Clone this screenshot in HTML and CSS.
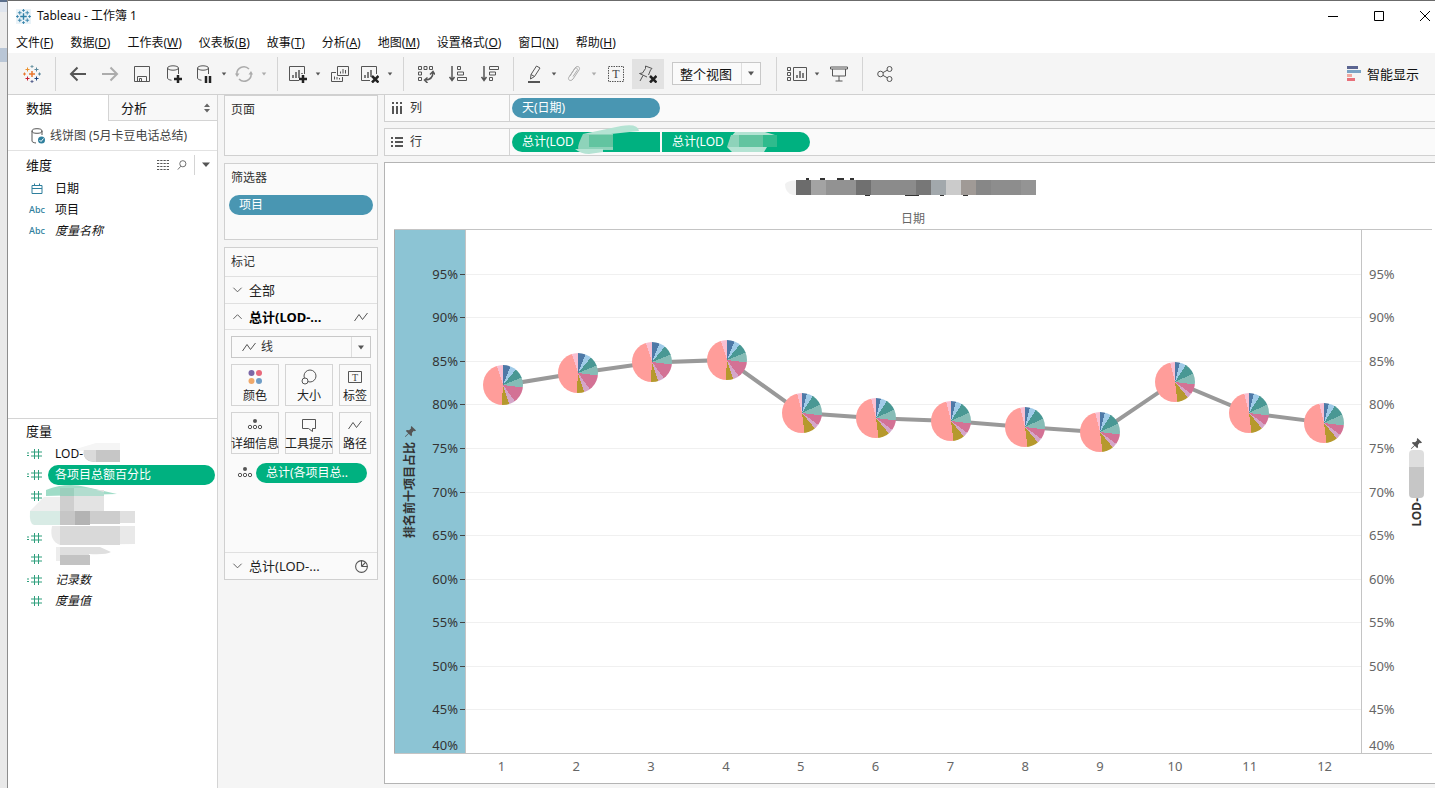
FILE: index.html
```html
<!DOCTYPE html>
<html lang="zh-CN">
<head>
<meta charset="utf-8">
<title>Tableau - 工作簿 1</title>
<link rel="stylesheet" href="styles.css">
</head>
<body>
<svg class="sprite" aria-hidden="true">
  <symbol id="i-line" viewBox="0 0 16 12"><path d="M1.500 10 L6 3.500 L9.500 8.500 L14.500 2"/></symbol>
  <symbol id="i-caret" viewBox="0 0 8 5"><path class="solid" d="M1 .5h6L4 4.500z"/></symbol>
  <symbol id="i-num" viewBox="0 0 16 12"><path d="M8.500 1v10M12.500 1v10M5 4h11M5 8h11"/></symbol>
  <symbol id="i-calc" viewBox="0 0 16 12"><path d="M8.500 1v10M12.500 1v10M5 4h11M5 8h11M1 5h2M1 7.500h2"/></symbol>
  <symbol id="i-detail" viewBox="0 0 16 14"><circle class="solid" cx="8" cy="3" r="2"/><circle cx="3" cy="9" r="1.700"/><circle cx="8" cy="9" r="1.700"/><circle cx="13" cy="9" r="1.700"/></symbol>
  <symbol id="i-down" viewBox="0 0 12 8"><path d="M1.500 1.500L6 6l4.500-4.500"/></symbol>
  <symbol id="i-up" viewBox="0 0 12 8"><path d="M1.500 6L6 1.500 10.500 6"/></symbol>
  <symbol id="i-pin" viewBox="0 0 14 14"><path class="solid" d="M8 1l5 5-1.500.7-1-.4-2 2.200.2 2.500-1 1-2.600-2.600L1.500 13 1 12.500 4.600 9 2 6.400l1-1 2.500.2 2.200-2L7.300 2.500z"/></symbol>
</svg>

<div class="desktop-edge"></div>
<div class="app">
  <header class="titlebar">
    <svg class="app-icon" viewBox="0 0 16 16"><rect width="16" height="16" fill="#eaf3f8"/><path d="M8 4.500v7M4.500 8h7" stroke="#2f7fa5" stroke-width="1.500"/><path d="M8 0v3M6.500 1.500h3M8 13v3M6.500 14.500h3M0 8h3M1.500 6.500v3M13 8h3M14.500 6.500v3M4 2v4M2 4h4M12 2v4M10 4h4M4 10v4M2 12h4M12 10v4M10 12h4" stroke="#3b86ad"/></svg>
    <span class="window-title">Tableau - 工作簿 1</span>
    <div class="window-buttons">
      <button aria-label="最小化"><svg viewBox="0 0 12 12"><path d="M1 6.500h10"/></svg></button>
      <button aria-label="最大化"><svg viewBox="0 0 12 12"><path d="M1.500 1.500h9v9h-9z"/></svg></button>
      <button aria-label="关闭"><svg viewBox="0 0 12 12"><path d="M1 1l10 10M11 1L1 11"/></svg></button>
    </div>
  </header>

  <nav class="menubar">
    <button>文件(<u>F</u>)</button><button>数据(<u>D</u>)</button><button>工作表(<u>W</u>)</button><button>仪表板(<u>B</u>)</button><button>故事(<u>T</u>)</button><button>分析(<u>A</u>)</button><button>地图(<u>M</u>)</button><button>设置格式(<u>O</u>)</button><button>窗口(<u>N</u>)</button><button>帮助(<u>H</u>)</button>
  </nav>

  <div class="toolbar">
    <button class="tool" aria-label="开始页面"><svg viewBox="0 0 18 18"><path d="M9 6v6M6 9h6" stroke="#e8762d" stroke-width="1.500"/><path d="M9 0v3M7.500 1.500h3" stroke="#7199a6"/><path d="M9 15v3M7.500 16.500h3" stroke="#5b6591"/><path d="M0 9h3M1.500 7.500v3" stroke="#e8762d"/><path d="M15 9h3M16.500 7.500v3" stroke="#5b879b"/><path d="M4.500 2.500v4M2.500 4.500h4" stroke="#eb912c"/><path d="M13.500 2.500v4M11.500 4.500h4" stroke="#59879b"/><path d="M4.500 11.500v4M2.500 13.500h4" stroke="#c72035"/><path d="M13.500 11.500v4M11.500 13.500h4" stroke="#1f457e"/></svg></button>
    <span class="sep"></span>
    <button class="tool" aria-label="撤消"><svg viewBox="0 0 18 18"><path class="heavy" d="M17 9H2M8.500 2.500L2 9l6.500 6.500"/></svg></button>
    <button class="tool faint" aria-label="重做"><svg viewBox="0 0 18 18"><path class="heavy" d="M1 9h15M9.500 2.500L16 9l-6.500 6.500"/></svg></button>
    <button class="tool" aria-label="保存"><svg viewBox="0 0 18 18"><path d="M1.500 1.500h15v15h-15zM4.500 16.500v-5h9v5M6.500 16.500v-3h2v3"/></svg></button>
    <button class="tool" aria-label="新建数据源"><svg viewBox="0 0 18 18"><ellipse cx="8" cy="3" rx="5.500" ry="2.200"/><path d="M2.500 3v10c0 1 1.500 2 4 2.200M13.500 3v6"/><path class="bold" d="M13 10v8M9 14h8"/></svg></button>
    <button class="tool narrow" aria-label="暂停自动更新"><svg viewBox="0 0 18 18"><ellipse cx="8" cy="3" rx="5.500" ry="2.200"/><path d="M2.500 3v10c0 1 1.500 2 4 2.200M13.500 3v6"/><path class="bold" d="M11 11v7M15 11v7"/></svg></button>
    <button class="drop" aria-label="更新选项"><svg><use href="#i-caret"/></svg></button>
    <button class="tool narrow faint" aria-label="刷新"><svg viewBox="0 0 18 18"><path class="mid" d="M2 10a7 7 0 0 1 12-6M16 8a7 7 0 0 1-12 6"/><path class="solid" d="M0 8.500h4.500L2 12zM13.500 9.500h4.500L16 6z"/></svg></button>
    <button class="drop faint" aria-label="刷新选项"><svg><use href="#i-caret"/></svg></button>
    <span class="sep"></span>
    <button class="tool narrow" aria-label="新建工作表"><svg viewBox="0 0 18 18"><path d="M10 15.500H.5v-14h15V9"/><path class="mid" d="M4 13v-3M7 13V7M10 13V5M13 9V8"/><path class="bold" d="M14 10v8M10 14h8"/></svg></button>
    <button class="drop" aria-label="新建选项"><svg><use href="#i-caret"/></svg></button>
    <button class="tool" aria-label="复制工作表"><svg viewBox="0 0 18 18"><path d="M6.500 1.500h11v9h-11zM5 7.500H.5v9h11V12"/><path d="M9.500 8.500V6.500M12 8.500V4M14.500 8.500V5M3.500 14.500v-3M6 14.500V12M8.500 14.500V13"/></svg></button>
    <button class="tool narrow" aria-label="清除工作表"><svg viewBox="0 0 18 18"><path d="M9 15.500H.5v-14h15V9"/><path class="mid" d="M4 13v-3M7 13V7M10 12V5"/><path class="bold" d="M11 11l6.500 6.500M17.500 11L11 17.500"/></svg></button>
    <button class="drop" aria-label="清除选项"><svg><use href="#i-caret"/></svg></button>
    <span class="sep"></span>
    <button class="tool" aria-label="交换行和列"><svg viewBox="0 0 18 18"><path d="M1.500 1.500h3v3h-3zM7 1.500h3v3H7zM12.500 1.500h3v3h-3zM1.500 7h3v3h-3zM1.500 12.500h3v3h-3z"/><path class="mid" d="M16 7c0 5-3 8-8 8M13 9.500L16 6.500l2 3M10.500 12.500L7.500 15l3 3"/></svg></button>
    <button class="tool" aria-label="升序排序"><svg viewBox="0 0 18 18"><path class="mid" d="M3 1v14M.5 12L3 15.500 5.500 12"/><path d="M8.500 1.500h3v3h-3zM8.500 7h6v3h-6zM8.500 12.500h9v3h-9z"/></svg></button>
    <button class="tool" aria-label="降序排序"><svg viewBox="0 0 18 18"><path class="mid" d="M3 1v14M.5 12L3 15.500 5.500 12"/><path d="M8.500 1.500h9v3h-9zM8.500 7h6v3h-6zM8.500 12.500h3v3h-3z"/></svg></button>
    <span class="sep"></span>
    <button class="tool narrow" aria-label="突出显示"><svg viewBox="0 0 18 18"><path d="M6 9.500L11.500 1l3.500 2-5.500 8.500-4 2.500zM6 9.500l3.500 2"/><path class="heavy" d="M3 17h12"/></svg></button>
    <button class="drop" aria-label="突出显示选项"><svg><use href="#i-caret"/></svg></button>
    <button class="tool narrow faint" aria-label="分组"><svg viewBox="0 0 18 18"><path d="M5 11l5-8c2-3 6-1 4 2l-6 9c-2 3-6 1-4-2l5.500-8c1.500-2 4-.5 2.500 1.500l-4 6"/></svg></button>
    <button class="drop faint" aria-label="分组选项"><svg><use href="#i-caret"/></svg></button>
    <button class="tool" aria-label="显示标记标签"><svg viewBox="0 0 18 18"><path stroke-dasharray="1.500 1" d="M1.500 1.500h15v15h-15z"/><text x="9" y="13" text-anchor="middle">T</text></svg></button>
    <button class="tool active" aria-label="修复轴"><svg viewBox="0 0 18 18"><path d="M6.500 1l6.500 2.500-1.500 1.500-2 5M6.500 1v2.500L3.500 8 .5 8.500 8 12M4 10.500L1 16"/><path class="bold" d="M11 11l6.500 6.500M17.500 11L11 17.500"/></svg></button>
    <div class="select-box fit"><select aria-label="适合"><option>整个视图</option></select><span class="arrow"><svg><use href="#i-caret"/></svg></span></div>
    <span class="sep"></span>
    <button class="tool narrow wide-icon" aria-label="显示卡"><svg viewBox="0 0 20 18"><path d="M.5 2.500h3v3h-3zM.5 7.500h3v3h-3zM.5 12.500h3v3h-3zM6.500 2.500h13v13h-13z"/><path class="mid" d="M10 13v-3M13 13V6M16 13V8"/></svg></button>
    <button class="drop" aria-label="显示卡选项"><svg><use href="#i-caret"/></svg></button>
    <button class="tool" aria-label="演示模式"><svg viewBox="0 0 18 18"><path d="M.5 2h17v2H.5zM2.500 4v7h13V4M9 11v5M5.500 16h7"/></svg></button>
    <span class="sep"></span>
    <button class="tool" aria-label="共享"><svg viewBox="0 0 18 18"><circle cx="4.500" cy="9" r="2.800"/><circle cx="13.500" cy="4" r="2.500"/><circle cx="13.500" cy="14" r="2.500"/><path d="M7 7.600l4.300-2.400M7 10.400l4.300 2.400"/></svg></button>
    <button class="show-me"><svg viewBox="0 0 14 16"><path fill="#5b6591" d="M0 0h11v3H0z"/><path fill="#7ba3c4" d="M0 4h14v3H0z"/><path fill="#f0a9a0" d="M0 8h5v3H0z"/><path fill="#e8707a" d="M0 12h8v3H0z"/></svg>智能显示</button>
  </div>

  <div class="workspace">
    <aside class="data-pane">
      <div class="tabs">
        <button class="tab selected">数据</button>
        <button class="tab">分析<svg viewBox="0 0 6 10"><path d="M0 4l3-3.500L6 4zM0 6l3 3.500L6 6z"/></svg></button>
      </div>
      <div class="source">
        <svg viewBox="0 0 14 16"><ellipse cx="6" cy="3" rx="5" ry="2.300"/><path d="M1 3v10c0 1 1.500 1.700 4 2M11 3v4"/><circle cx="10.500" cy="12" r="3.500" fill="#2f7f9d" stroke="none"/><path stroke="#fff" d="M8.500 12l1.500 1.500 2.500-3"/></svg>
        <span>线饼图 (5月卡豆电话总结)</span>
      </div>
      <section class="dimensions">
        <div class="section-head"><h2>维度</h2>
          <button aria-label="查看数据"><svg viewBox="0 0 12 10"><path stroke-dasharray="2.250 1" d="M0 .5h12M0 3.500h12M0 6.500h12M0 9.500h12"/></svg></button>
          <button aria-label="查找字段"><svg viewBox="0 0 12 12"><circle cx="7" cy="4.500" r="3.700"/><path d="M4.500 7.500L1 11.500"/></svg></button>
          <span class="bar"></span>
          <button aria-label="菜单"><svg viewBox="0 0 8 5"><path class="solid" d="M0 .5h8L4 5z"/></svg></button>
        </div>
        <ul class="fields blue">
          <li><span class="type"><svg viewBox="0 0 12 12"><path d="M1 2.500h10v8H1zM1 5.500h10M3.500.5v2M8.500.5v2"/></svg></span><span class="name">日期</span></li>
          <li><span class="type">Abc</span><span class="name">项目</span></li>
          <li><span class="type">Abc</span><span class="name generated">度量名称</span></li>
        </ul>
      </section>
      <section class="measures">
        <div class="section-head"><h2>度量</h2></div>
        <ul class="fields green">
          <li><span class="type"><svg><use href="#i-calc"/></svg></span><span class="name">LOD-</span></li>
          <li><span class="type"><svg><use href="#i-calc"/></svg></span><span class="name chosen">各项目总额百分比</span></li>
          <li><span class="type"><svg><use href="#i-num"/></svg></span></li>
          <li></li>
          <li><span class="type"><svg><use href="#i-calc"/></svg></span></li>
          <li><span class="type"><svg><use href="#i-num"/></svg></span></li>
          <li><span class="type"><svg><use href="#i-calc"/></svg></span><span class="name generated">记录数</span></li>
          <li><span class="type"><svg><use href="#i-num"/></svg></span><span class="name generated">度量值</span></li>
        </ul>
        <svg class="redaction list-redaction" viewBox="0 0 125 130"><path fill="#f5f5f5" d="M52 6l20-6h24v8H56z"/><path fill="#c6c6c6" d="M60 7h36v12H70q-12-1-10-12z"/><path fill="#dadada" d="M60 7h12v12q-14-1-12-12z"/>
          <path fill="#9fdcc7" d="M22 47q20-8 40-3l31 7-71 2z"/><path fill="#e3e3e3" d="M36 47h44v22H36z"/><path fill="#9bcfbd" d="M36 45h14v8H36z"/><path fill="#b2ddcf" d="M50 45h15l15 4v4H50z"/><path fill="#cfcfcf" d="M36 53h14v15H36z"/><path fill="#efefef" d="M20 54h16v14H6z"/><path fill="#d8ebe5" d="M6 68h30v14H10q-5-1-4-14z"/><path fill="#c6c6c6" d="M36 68h15v14H36z"/><path fill="#b3b3b3" d="M51 68h15v14H51z"/><path fill="#cdcdcd" d="M66 68h30v13H66z"/><path fill="#e0e0e0" d="M96 68h15v12H96z"/>
          <path fill="#e9e9e9" d="M28 83h83v18l-75 1q-11-4-8-19z"/><path fill="#d9d9d9" d="M36 83h60v19H36z"/><path fill="#ededed" d="M32 104h12v14H32z"/><path fill="#dfdfdf" d="M36 104h40l11 5q-5 3-22 2v2H36z"/><path fill="#c3c3c3" d="M36 112h30v10H36z"/></svg>
      </section>
    </aside>

    <div class="cards">
      <section class="card pages"><h3>页面</h3></section>
      <section class="card filters"><h3>筛选器</h3><span class="pill dim">项目</span></section>
      <section class="card marks">
        <h3>标记</h3>
        <button class="mark-head"><svg class="chev"><use href="#i-down"/></svg>全部</button>
        <button class="mark-head open"><svg class="chev"><use href="#i-up"/></svg>总计(LOD-...<svg class="kind"><use href="#i-line"/></svg></button>
        <div class="mark-body">
          <div class="select-box mark-type"><svg class="kind"><use href="#i-line"/></svg><select aria-label="标记类型"><option>线</option></select><span class="arrow"><svg><use href="#i-caret"/></svg></span></div>
          <div class="mark-grid">
            <button><svg viewBox="0 0 16 16"><g stroke="none"><circle cx="4.500" cy="4" r="3" fill="#7b66a6"/><circle cx="12" cy="4" r="3" fill="#e8697b"/><circle cx="4.500" cy="12" r="3" fill="#efa86a"/><circle cx="12" cy="12" r="3" fill="#6f9dc6"/></g></svg>颜色</button>
            <button><svg viewBox="0 0 16 16"><circle cx="9" cy="7" r="6"/><circle cx="4" cy="12" r="3" fill="#fafafa"/></svg>大小</button>
            <button><svg viewBox="0 0 16 16"><path d="M1.500 2.500h13v11h-13z"/><text x="8" y="12" text-anchor="middle">T</text></svg>标签</button>
            <button><svg viewBox="0 0 16 14"><use href="#i-detail"/></svg>详细信息</button>
            <button><svg viewBox="0 0 16 16"><path d="M1.500 2.500h13v9h-3v3l-4-3h-6z"/></svg>工具提示</button>
            <button><svg viewBox="0 0 16 12"><use href="#i-line"/></svg>路径</button>
          </div>
          <div class="encoding"><svg viewBox="0 0 16 14"><use href="#i-detail"/></svg><span class="pill mea">总计(各项目总..</span></div>
        </div>
        <button class="mark-head last"><svg class="chev"><use href="#i-down"/></svg>总计(LOD-...<svg class="kind" viewBox="0 0 14 14"><circle cx="7" cy="7" r="5.500"/><path d="M7 7V1.500M7 7l4-4M7 7h5.500"/></svg></button>
      </section>
    </div>

    <main class="main">
      <div class="shelf"><span class="shelf-label"><svg viewBox="0 0 12 14"><path stroke-width="2" d="M2 5v8M6 5v8M10 5v8M2 1v2M6 1v2M10 1v2"/></svg>列</span><div class="shelf-items"><span class="pill dim">天(日期)</span></div></div>
      <div class="shelf"><span class="shelf-label"><svg viewBox="0 0 12 14"><path stroke-width="2" d="M4 3h8M4 7h8M4 11h8M0 3h2M0 7h2M0 11h2"/></svg>行</span><div class="shelf-items"><span class="pill mea first">总计(LOD</span><span class="pill mea second">总计(LOD</span>
        <svg class="redaction shelf-redaction" viewBox="0 0 220 30"><path fill="#b4e3d3" d="M12 9L50 1q17-3 18 5L40 9z"/><path fill="#8ed3ba" d="M12 9h30v16H8q-3-2 4-16z"/><path fill="#62c4a0" d="M18 10h24v12H18z"/><path fill="#b4e3d3" d="M4 24h28v3l-14 2q-8 0-14-5z"/><path fill="#b4e3d3" d="M164 7h30l10 3-10 3h-35zM156 22h40l-3 5h-32z"/><path fill="#8ed3ba" d="M160 10h38v12h-42z"/><path fill="#62c4a0" d="M168 10h24v12h-24z"/><path fill="#2fbb8d" d="M192 10h14v12h-14z"/></svg></div></div>

      <div class="view">
        <div class="sheet-title"><svg viewBox="0 0 256 24"><path fill="#f1f1f1" d="M0 9q4-5 15-3h235v14H8q-8-2-8-11z"/><path fill="#333" d="M21 3h3v2h-3zM35 3h5v2h-5zM52 3h7v2h-7zM65 3h4v2h-4zM80 20h5v1h-5zM120 20h14v1h-14zM155 20h4v1h-4zM178 20h5v1h-5z"/><g id="title-blocks"></g></svg></div>
        <div class="column-title">日期</div>
        <div class="chart">
          <div class="axis left" id="axis-left"><div class="axis-title"><svg><use href="#i-pin"/></svg><span>排名前十项目占比</span></div></div>
          <div class="plot" id="plot"><svg class="line" viewBox="0 0 1200 600" preserveAspectRatio="none"><polyline id="trend"/></svg></div>
          <div class="axis right" id="axis-right"><div class="axis-title"><svg><use href="#i-pin"/></svg><i class="blurred"></i><span>LOD-</span></div></div>
        </div>
        <div class="days" id="days"></div>
      </div>
    </main>
  </div>
</div>
<script src="chart.js"></script>
</body>
</html>
```

FILE: styles.css
```css
* { box-sizing: border-box; }
html, body { height: 100%; }
body {
  margin: 0;
  display: flex;
  overflow: hidden;
  background: #f5f5f5;
  color: #111;
  font: 12px/20px "Noto Sans", "Open Sans", "Noto Sans CJK SC", sans-serif;
}
button, select { font: inherit; color: inherit; background: none; border: 0; padding: 0; margin: 0; }
h2, h3, ul { margin: 0; padding: 0; font-weight: 400; list-style: none; }
svg { display: block; flex: none; fill: none; stroke: #555; }
svg text { font: 12px "Liberation Serif", serif; fill: #444; stroke: none; }
.sprite { position: absolute; width: 0; height: 0; }
.solid { fill: #555; stroke: none; }
.mid { stroke-width: 1.5; }
.heavy { stroke-width: 2; }
.bold { stroke-width: 2.5; stroke: #222; }

.desktop-edge {
  flex: 0 0 8px;
  border-right: 1px solid #8d8d8d;
  background: linear-gradient(#5b6f8c 0 2px, #dfe5ee 2px 12px, #ececec 12px 48px, #b9c6d6 48px 62px, #e9e9e9 62px);
}
.app { flex: 1; min-width: 0; display: flex; flex-direction: column; border-top: 1px solid #6b6b6b; }

.titlebar { display: flex; align-items: center; height: 30px; padding: 0 0 0 8px; background: #fff; }
.app-icon { width: 15px; height: 15px; margin-right: 6px; stroke: none; }
.window-buttons { display: flex; gap: 26px; margin-left: auto; }
.window-buttons button { width: 20px; display: flex; justify-content: center; }
.window-buttons svg { width: 12px; height: 12px; stroke: #000; }

.menubar { display: flex; gap: 17px; height: 22px; align-items: center; padding: 2px 0 0 8px; background: #fff; white-space: nowrap; }

.toolbar { display: flex; align-items: center; height: 42px; padding-left: 8px; background: #f5f5f5; border-bottom: 1px solid #d0d0d0; }
.tool { width: 32px; height: 30px; display: flex; align-items: center; justify-content: center; }
.tool.narrow { width: 28px; }
.tool svg { width: 18px; height: 18px; }
.tool.wide-icon svg { width: 20px; }
.tool.active { background: #e2e2e2; }
.tool.faint, .drop.faint { opacity: .45; }
.drop { width: 12px; height: 30px; display: flex; align-items: center; justify-content: center; }
.drop svg { width: 6px; height: 4px; }
.sep { width: 1px; height: 34px; margin: 0 6px 0 7px; background: #d4d4d4; }
.select-box { display: flex; align-items: center; border: 1px solid #c8c8c8; background: #fafafa; }
.select-box select { flex: 1; min-width: 0; appearance: none; outline: 0; }
.select-box .arrow { align-self: stretch; width: 19px; display: flex; align-items: center; justify-content: center; border-left: 1px solid #dedede; pointer-events: none; }
.select-box .arrow svg { width: 8px; height: 5px; }
.fit { width: 89px; height: 23px; margin: 0 8px; padding-left: 7px; font-size: 13px; }
.show-me { display: flex; align-items: center; gap: 6px; margin: 0 16px 0 auto; font-size: 13px; }
.show-me svg { width: 14px; height: 16px; stroke: none; }

.workspace { flex: 1; min-height: 0; display: flex; }

.data-pane { flex: 0 0 210px; display: flex; flex-direction: column; background: #fff; border-right: 1px solid #d4d4d4; }
.tabs { display: flex; height: 26px; font-size: 13px; }
.tab { flex: 1; display: flex; align-items: center; justify-content: space-between; padding: 0 7px 0 12px; background: #f8f8f8; border: solid #d4d4d4; border-width: 0 0 1px 1px; }
.tab.selected { flex: 0 0 100px; padding-left: 18px; background: #fff; border: 0; }
.tab svg { width: 6px; height: 10px; fill: #666; stroke: none; }
.source { display: flex; align-items: center; gap: 5px; height: 30px; padding-left: 23px; color: #444; border-bottom: 1px solid #e2e2e2; }
.source svg { width: 14px; height: 16px; }
.dimensions { flex: 268; }
.measures { flex: 370; position: relative; border-top: 1px solid #d4d4d4; }
.section-head { display: flex; align-items: center; height: 27px; padding: 0 5px 0 18px; }
.section-head h2 { flex: 1; font-size: 13px; }
.section-head button { width: 12px; display: flex; justify-content: center; }
.section-head button + button { margin-left: 7px; }
.section-head svg { width: 12px; height: 10px; }
.section-head .bar { width: 1px; height: 20px; margin: 0 5px 0 6px; background: #d4d4d4; }
.section-head button:last-child svg { width: 8px; height: 5px; }
.fields li { display: flex; align-items: center; height: 21px; }
.fields .type { width: 40px; display: flex; justify-content: flex-end; padding-right: 3px; font-size: 9px; font-weight: 500; color: #2f7f9d; }
.fields .type svg { width: 16px; height: 12px; stroke: #2f9f7d; }
.blue .type svg { width: 12px; stroke: #2f7f9d; margin-right: 2px; }
.green .type { padding-right: 6px; }
.measures .section-head { height: 24px; }
.fields .name { padding-left: 7px; }
.generated { font-style: italic; }
.fields .chosen { flex: 1; margin-right: 2px; border-radius: 10px; background: #00b180; color: #fff; }
.redaction { position: absolute; stroke: none; }
.list-redaction { left: 16px; top: 24px; width: 125px; height: 130px; }

.cards { flex: 0 0 154px; margin: 0 6px 0 6px; display: flex; flex-direction: column; gap: 7px; }
.card { background: #fafafa; border: 1px solid #d0d0d0; color: #333; }
.card h3 { padding: 4px 6px; font-size: 12px; line-height: 20px; }
.pages { min-height: 61px; }
.filters { min-height: 77px; }
.filters h3 { padding-bottom: 7px; }
.pill { display: block; height: 20px; padding: 0 10px; border-radius: 10px; color: #fff; white-space: nowrap; }
.dim { background: #4996b2; }
.mea { background: #00b180; }
.filters .pill { margin: 0 4px; }
.mark-head { display: flex; align-items: center; width: 100%; height: 27px; padding: 0 8px 0 7px; font-size: 13px; color: #222; border-top: 1px solid #e0e0e0; }
.mark-head.open { height: 26px; font-weight: 700; color: #000; }
.mark-head .chev { width: 11px; height: 8px; margin-right: 6px; }
.kind { width: 16px; height: 12px; }
.mark-head .kind { margin-left: auto; }
.mark-head svg.kind[viewBox] { width: 15px; height: 15px; }
.mark-body { min-height: 223px; padding: 6px; border-top: 1px solid #e0e0e0; }
.mark-type { height: 22px; padding-left: 9px; }
.mark-type select { margin-left: 4px; }
.mark-grid { display: grid; grid-template-columns: 3fr 3fr 2fr; gap: 6px; margin: 6px 0 9px; }
.mark-grid button { min-width: 0; height: 42px; display: flex; flex-direction: column; align-items: center; justify-content: space-between; padding: 4px 0 0; line-height: 18px; border: 1px solid #d4d4d4; white-space: nowrap; color: #222; }
.mark-grid svg { width: 16px; height: 16px; }
.mark-grid text { font-size: 10px; }
.encoding { display: flex; align-items: center; gap: 3px; padding: 0 4px 0 6px; }
.encoding svg { width: 16px; height: 14px; }
.encoding .pill { flex: 1; }

.main { flex: 1; min-width: 0; display: flex; flex-direction: column; gap: 6px; padding-bottom: 4px; }
.shelf { display: flex; flex: none; height: 28px; background: #fafafa; border: 1px solid #d0d0d0; border-right: 0; }
.shelf:first-child { border-top: 0; height: 27px; }
.shelf-label { flex: 0 0 125px; display: flex; align-items: center; gap: 7px; padding-left: 6px; border-right: 1px solid #d4d4d4; color: #333; }
.shelf-label svg { width: 12px; height: 14px; }
.shelf-items { position: relative; display: flex; align-items: center; gap: 2px; padding-left: 2px; }
.shelf-items .pill { width: 148px; }
.first { border-radius: 10px 0 0 10px; }
.second { border-radius: 0 10px 10px 0; }
.shelf-redaction { left: 61px; top: -4px; width: 220px; height: 30px; }

.view { flex: 1; min-height: 0; display: flex; flex-direction: column; padding: 12px 3px 7px 9px; background: #fff; border: 1px solid #b4b4b4; border-right: 0; }
.sheet-title { display: flex; justify-content: center; height: 24px; }
.sheet-title svg { width: 256px; height: 24px; stroke: none; }
.column-title { display: flex; justify-content: center; margin: 10px 70px 0; color: #666; line-height: 20px; }
.chart { flex: 1; min-height: 0; display: flex; border: solid #c4c4c4; border-width: 1px 0; }
.axis { position: relative; flex: 0 0 70px; display: flex; align-items: center; font-size: 13px; color: #666; }
.axis.left { flex-basis: 71px; padding-left: 8px; background: #8cc4d4; border-left: 1px solid #aaa; color: #333; }
.axis.right { justify-content: flex-end; padding-right: 8px; }
.tick { position: absolute; height: 20px; margin-top: -10px; white-space: nowrap; }
.left .tick { right: 0; padding-right: 7px; }
.left .tick::after { content: ""; position: absolute; right: 0; top: 10px; width: 5px; height: 1px; background: #444; }
.right .tick { left: 7px; }
.tick.end { margin-top: -18px; }
.left .tick.end::after { display: none; }
.axis-title { display: flex; flex-direction: column; align-items: center; gap: 4px; padding-bottom: 20px; font-size: 12px; line-height: 14px; font-weight: 700; color: #333; }
.axis-title svg { width: 13px; height: 13px; }
.axis-title .solid { fill: #666a80; }
.axis-title span { writing-mode: vertical-rl; text-orientation: sideways; transform: rotate(180deg); }
.right .axis-title { gap: 0; }
.blurred { width: 15px; height: 48px; border-radius: 4px; background: linear-gradient(#dedede 0 17px, #c6c6c6 17px); }
.plot { position: relative; flex: 1; border: solid #c4c4c4; border-width: 0 1px; }
.grid { position: absolute; left: 0; right: 0; height: 1px; background: #f0f0f0; }
.line { position: absolute; left: 0; top: 0; width: 100%; height: 100%; }
.line polyline { stroke: #999; stroke-width: 4; vector-effect: non-scaling-stroke; }
.pie { position: absolute; width: 40px; height: 40px; margin: -20px 0 0 -20px; border-radius: 50%; }
.days { display: grid; grid-template-columns: repeat(12, 1fr); margin: 2px 70px 0; text-align: center; font-size: 13px; line-height: 20px; color: #666; }
```

FILE: chart.js
```javascript
const MIN = 40, MAX = 100;
const values = [82.2, 83.6, 84.8, 85.1, 79.0, 78.4, 78.1, 77.4, 76.8, 82.6, 79.0, 77.9];
const colors = ["#4e79a7", "#a0cbe8", "#499894", "#86bcb6", "#d37295", "#d4a6c8", "#b6992d", "#ff9d9a", "#fabfd2"];
const earlySplit = [6, 11, 19, 27, 40, 45, 51, 95, 100];
const lateSplit = [4, 9, 18, 27, 35, 39, 48, 96, 100];
const offset = v => (MAX - v) / (MAX - MIN) * 100;

function add(parent, className, style, text) {
  const el = document.createElement("div");
  el.className = className;
  Object.assign(el.style, style);
  if (text) el.textContent = text;
  parent.append(el);
  return el;
}

function drawChart() {
  const plot = document.getElementById("plot");
  for (let v = 95; v >= MIN; v -= 5) {
    for (const side of ["axis-left", "axis-right"]) {
      add(document.getElementById(side), v === MIN ? "tick end" : "tick", { top: offset(v) + "%" }, v + "%");
    }
    if (v > MIN) add(plot, "grid", { top: offset(v) + "%" });
  }
  plot.append(plot.querySelector(".line"));
  document.getElementById("trend").setAttribute("points",
    values.map((v, i) => `${i * 100 + 50},${offset(v) * 6}`).join(" "));
  values.forEach((v, i) => {
    const split = i < 4 ? earlySplit : lateSplit;
    const stops = colors.map((c, k) => `${c} ${k ? split[k - 1] : 0}% ${split[k]}%`).join(", ");
    add(plot, "pie", { left: (i + 0.5) / 12 * 100 + "%", top: offset(v) + "%", background: `conic-gradient(${stops})` });
    add(document.getElementById("days"), "day", {}, String(i + 1));
  });
}

function drawTitleBlocks() {
  const shades = ["#6c6c6c", "#a3a3a3", "#929292", "#929292", "#707070", "#8b8b8b", "#8b8b8b", "#8b8b8b", "#777", "#a2a8ac", "#cbcbcb", "#a09a96", "#878787", "#8d8d8d", "#8d8d8d", "#949494"];
  document.getElementById("title-blocks").innerHTML =
    shades.map((c, i) => `<rect x="${11 + i * 15}" y="5" width="15" height="15" fill="${c}"/>`).join("");
}

drawTitleBlocks();
drawChart();
```
